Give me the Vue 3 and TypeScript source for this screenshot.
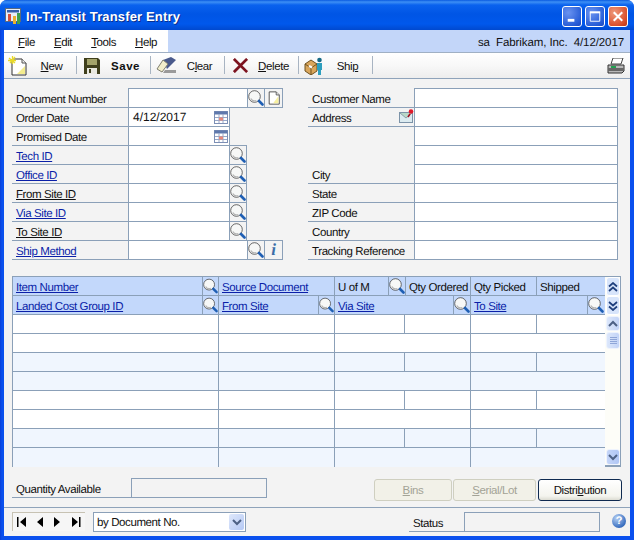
<script setup lang="ts">
import { computed } from 'vue'

type Box = { type: 'input' | 'short' | 'lens' | 'doc' | 'info'; text?: string; cal?: boolean }

const menus = [
  { u: 'F', rest: 'ile' },
  { u: 'E', rest: 'dit' },
  { u: 'T', rest: 'ools' },
  { u: 'H', rest: 'elp' }
]

const tools = [
  { icon: 'new', a: '', u: 'N', b: 'ew', bold: false },
  { icon: 'save', a: 'Save', u: '', b: '', bold: true },
  { icon: 'clear', a: 'C', u: 'l', b: 'ear', bold: false },
  { icon: 'delete', a: '', u: 'D', b: 'elete', bold: false },
  { icon: 'ship', a: 'Shi', u: 'p', b: '', bold: false }
]

const shortLens: Box[] = [{ type: 'short' }, { type: 'lens' }]

const leftRows: { label: string; kind: string; boxes: Box[] }[] = [
  { label: 'Document Number', kind: '', boxes: [{ type: 'input' }, { type: 'lens' }, { type: 'doc' }] },
  { label: 'Order Date', kind: '', boxes: [{ type: 'short', text: '4/12/2017', cal: true }] },
  { label: 'Promised Date', kind: '', boxes: [{ type: 'short', cal: true }] },
  { label: 'Tech ID', kind: 'link', boxes: shortLens },
  { label: 'Office ID', kind: 'link', boxes: shortLens },
  { label: 'From Site ID', kind: 'plain-link', boxes: shortLens },
  { label: 'Via Site ID', kind: 'link', boxes: shortLens },
  { label: 'To Site ID', kind: 'plain-link', boxes: shortLens },
  { label: 'Ship Method', kind: 'link', boxes: [{ type: 'input' }, { type: 'lens' }, { type: 'info' }] }
]

const rightRows = [
  { label: 'Customer Name', kind: '' },
  { label: 'Address', kind: 'note' },
  { label: '', kind: 'blank' },
  { label: '', kind: 'blank' },
  { label: 'City', kind: '' },
  { label: 'State', kind: '' },
  { label: 'ZIP Code', kind: '' },
  { label: 'Country', kind: '' },
  { label: 'Tracking Reference', kind: '' }
]

const headOne = [
  { w: 190, text: 'Item Number', link: true },
  { w: 16, lens: true },
  { w: 116, text: 'Source Document', link: true },
  { w: 54, text: 'U of M' },
  { w: 17, lens: true },
  { w: 65, text: 'Qty Ordered' },
  { w: 66, text: 'Qty Picked' },
  { w: 67, text: 'Shipped', last: true }
]

const headTwo = [
  { w: 190, text: 'Landed Cost Group ID', link: true },
  { w: 16, lens: true },
  { w: 100, text: 'From Site', link: true },
  { w: 16, lens: true },
  { w: 119, text: 'Via Site', link: true },
  { w: 17, lens: true },
  { w: 117, text: 'To Site', link: true },
  { w: 16, lens: true, last: true }
]

const splitCols = [206, 116, 70, 66, 66, 67]
const wideCols = [206, 116, 136, 133]

const bodyRows = computed(() =>
  Array.from({ length: 8 }, (_, i) => ({
    cols: i % 2 === 0 ? splitCols : wideCols,
    tinted: Math.floor(i / 2) % 2 === 1
  }))
)
</script>

<template>
  <div class="window">
    <svg class="sprites" width="0" height="0">
      <symbol id="lens" viewBox="0 0 16 16">
        <circle cx="6.500" cy="6.500" r="5.800" fill="#f7f8f7" stroke="#444" stroke-width="0.800" />
        <path d="M2.800 8.500a4.500 4.500 0 0 0 5.500 2" fill="none" stroke="#b4b4b4" stroke-width="1.300" />
        <path d="M11 11l3.500 3.500" stroke="#1f5fb4" stroke-width="2.600" stroke-linecap="round" />
      </symbol>
      <symbol id="doc" viewBox="0 0 16 16">
        <path d="M2.500 1h8l3.500 3.500V15h-11.500z" fill="#fff" stroke="#444" />
        <path d="M13 6v8H7z" fill="#f7f0a0" />
        <path d="M10.500 1v3.500H14" fill="#eee" stroke="#555" />
      </symbol>
      <symbol id="calendar" viewBox="0 0 14 13">
        <rect x="0.500" y="0.500" width="13" height="12" fill="#fff" stroke="#7c8fb5" />
        <rect x="0.500" y="0.500" width="13" height="3" fill="#5f79ad" />
        <path d="M5 3v9M9 3v9M1 6.500h12M1 9.500h12" stroke="#98a8c8" />
        <rect x="5" y="6.500" width="4" height="3" fill="#e8887a" />
      </symbol>
      <symbol id="new" viewBox="0 0 20 20">
        <path d="M4 3h10l4 4v12H4z" fill="#fff" stroke="#333" />
        <path d="M17 10v8h-8z" fill="#f3ec8e" />
        <path d="M14 3v4h4" fill="#eee" stroke="#555" />
        <path d="M1 2l6 5M7 1L2 7M0 4.500h8M4.500 0v8" stroke="#e8d92a" stroke-width="1.300" />
      </symbol>
      <symbol id="save" viewBox="0 0 16 16">
        <path d="M0 0h14l2 2v14H0z" fill="#3f3f1c" />
        <rect x="3" y="1" width="10" height="6" fill="#a3a36a" />
        <rect x="3" y="10" width="10" height="6" fill="#e8e8e0" />
        <rect x="5" y="11" width="2" height="4" fill="#3f3f1c" />
      </symbol>
      <symbol id="clear" viewBox="0 0 20 18">
        <path d="M7 3l8-3 5 3-9 9z" fill="#4a5a8c" />
        <path d="M1 12l6-9 5 4-6 8z" fill="#f2eecb" stroke="#7f7f70" />
        <path d="M9 13h11v3H7z" fill="#9a9a9a" />
      </symbol>
      <symbol id="delete" viewBox="0 0 16 16">
        <path d="M2 2l12 12M14 2L2 14" stroke="#7d1420" stroke-width="3" stroke-linecap="square" />
      </symbol>
      <symbol id="ship" viewBox="0 0 20 18">
        <path d="M1 7l6-4 6 4v7l-6 4-6-4z" fill="#d9a65c" stroke="#6f5220" />
        <path d="M1 7l6 4 6-4M7 11v7" fill="none" stroke="#6f5220" />
        <path d="M5 9l3 1.500" stroke="#fff" stroke-width="2" />
        <circle cx="15.500" cy="3" r="2.300" fill="#176a86" />
        <path d="M13 6h5v7h-1v5h-3v-5h-1z" fill="#2d9fbe" />
      </symbol>
      <symbol id="printer" viewBox="0 0 18 16">
        <path d="M6 0h10l-2 6H4z" fill="#fff" stroke="#444" />
        <path d="M1 7h16v6l-2 2H1z" fill="#b8b8b8" stroke="#333" />
        <path d="M1 10h16v3H1z" fill="#666" />
        <rect x="4" y="8" width="5" height="2" fill="#22a050" />
      </symbol>
      <symbol id="note" viewBox="0 0 15 15">
        <rect x="0.500" y="3.500" width="13" height="10" fill="#dcebf0" stroke="#7c93a8" />
        <path d="M1 4l6 5 6-5" fill="#b9d8c8" stroke="#8aa0aa" />
        <circle cx="12" cy="2.500" r="2.300" fill="#e01a2b" />
        <path d="M11 5l-2 3" stroke="#a01020" stroke-width="1.500" />
      </symbol>
      <symbol id="up2" viewBox="0 0 10 10">
        <path d="M1 4.500l4-3.500 4 3.500M1 9l4-3.500L9 9" fill="none" stroke="#1f3f7c" stroke-width="1.700" />
      </symbol>
      <symbol id="down2" viewBox="0 0 10 10">
        <path d="M1 1l4 3.500L9 1M1 5.500L5 9l4-3.500" fill="none" stroke="#1f3f7c" stroke-width="1.700" />
      </symbol>
      <symbol id="up1" viewBox="0 0 10 8">
        <path d="M1 6l4-4 4 4" fill="none" stroke="#4d6185" stroke-width="2" />
      </symbol>
      <symbol id="down1" viewBox="0 0 10 8">
        <path d="M1 2l4 4 4-4" fill="none" stroke="#4d6185" stroke-width="2" />
      </symbol>
    </svg>

    <header class="titlebar">
      <svg class="app-icon" width="18" height="18" viewBox="0 0 18 18">
        <rect x="0.500" y="1.500" width="15" height="13" fill="#e8eef8" stroke="#5a6a80" />
        <rect x="2" y="3" width="12" height="2.500" fill="#385fa8" />
        <rect x="3" y="7" width="3" height="7" fill="#d8503a" />
        <rect x="8" y="9" width="3" height="8" fill="#e8b030" />
        <rect x="12" y="6" width="3" height="11" fill="#3f9f4c" />
      </svg>
      <span class="title">In-Transit Transfer Entry</span>
      <div class="controls">
        <span class="ctl">
          <svg width="18" height="19" viewBox="0 0 19 19"><rect x="5" y="12" width="7" height="3" fill="#fff" /></svg>
        </span>
        <span class="ctl">
          <svg width="18" height="19" viewBox="0 0 19 19"><path d="M4.500 5.500h10v9h-10z" fill="none" stroke="#fff" /><rect x="4" y="4" width="11" height="2" fill="#fff" /></svg>
        </span>
        <span class="ctl close">
          <svg width="18" height="19" viewBox="0 0 19 19"><path d="M5 5l9 9M14 5l-9 9" stroke="#fff" stroke-width="2.200" /></svg>
        </span>
      </div>
    </header>

    <main class="client">
      <div class="menubar">
        <nav class="menus">
          <span v-for="m in menus" :key="m.u" class="menu"><u>{{ m.u }}</u>{{ m.rest }}</span>
        </nav>
        <span class="session">sa&nbsp; Fabrikam, Inc.&nbsp; 4/12/2017</span>
      </div>

      <div class="toolbar">
        <button v-for="t in tools" :key="t.icon" class="tool" type="button">
          <span class="tool-icon"><svg :class="'ico-' + t.icon"><use :href="'#' + t.icon" /></svg></span>
          <span class="tool-label" :class="{ bold: t.bold }">{{ t.a }}<u v-if="t.u">{{ t.u }}</u>{{ t.b }}</span>
        </button>
        <svg class="printer" width="18" height="16"><use href="#printer" /></svg>
      </div>

      <section class="form">
        <div class="col left">
          <div v-for="row in leftRows" :key="row.label" class="row">
            <label class="lbl" :class="row.kind"><span>{{ row.label }}</span></label>
            <template v-for="(b, i) in row.boxes" :key="i">
              <div v-if="b.type === 'input' || b.type === 'short'" class="field" :class="b.type">
                <span>{{ b.text }}</span>
                <svg v-if="b.cal" class="cal" width="14" height="13"><use href="#calendar" /></svg>
              </div>
              <div v-else class="ibtn" :class="b.type">
                <svg v-if="b.type === 'lens'" width="16" height="16"><use href="#lens" /></svg>
                <svg v-else-if="b.type === 'doc'" width="14" height="16"><use href="#doc" /></svg>
                <span v-else class="info">i</span>
              </div>
            </template>
          </div>
        </div>
        <div class="col right">
          <div v-for="(row, i) in rightRows" :key="i" class="row">
            <label class="lbl" :class="row.kind">
              <span>{{ row.label }}</span>
              <svg v-if="row.kind === 'note'" class="note-ico" width="15" height="15"><use href="#note" /></svg>
            </label>
            <div class="field wide"></div>
          </div>
        </div>
      </section>

      <section class="grid-wrap">
        <div class="grid">
          <div v-for="(head, h) in [headOne, headTwo]" :key="h" class="grid-row head">
            <div
              v-for="(c, i) in head"
              :key="i"
              class="cell"
              :class="{ last: c.last, icon: c.lens }"
              :style="{ width: c.w + 'px' }"
            >
              <svg v-if="c.lens" width="16" height="16"><use href="#lens" /></svg>
              <span v-else :class="{ link: c.link }">{{ c.text }}</span>
            </div>
          </div>
          <div v-for="(r, n) in bodyRows" :key="n" class="grid-row" :class="{ tinted: r.tinted }">
            <div
              v-for="(w, i) in r.cols"
              :key="i"
              class="cell"
              :class="{ last: i === r.cols.length - 1 }"
              :style="{ width: w + 'px' }"
            ></div>
          </div>
        </div>
        <aside class="scroller">
          <div class="jump"><svg width="10" height="10"><use href="#up2" /></svg></div>
          <div class="jump"><svg width="10" height="10"><use href="#down2" /></svg></div>
          <div class="track">
            <div class="sb"><svg width="10" height="8"><use href="#up1" /></svg></div>
            <div class="sb thumb"><i></i><i></i><i></i><i></i></div>
            <div class="sb end"><svg width="10" height="8"><use href="#down1" /></svg></div>
          </div>
        </aside>
      </section>

      <section class="footer">
        <div class="qty">
          <span class="lbl">Quantity Available</span>
          <div class="qty-box"></div>
        </div>
        <div class="actions">
          <button class="btn off" type="button" disabled><u>B</u>ins</button>
          <button class="btn off serial" type="button" disabled><u>S</u>erial/Lot</button>
          <button class="btn on" type="button">Distri<u>b</u>ution</button>
        </div>
      </section>

      <footer class="status">
        <div class="nav">
          <svg width="73" height="18" viewBox="0 0 73 18">
            <path d="M5 4h1.500v10H5zM14 4v10L8 9zM31 4v10l-6-5zM42 4v10l6-5zM60 4v10l6-5zM67 4h1.500v10H67z" fill="#000" />
          </svg>
        </div>
        <div class="select">
          <span>by Document No.</span>
          <span class="drop"><svg width="10" height="8"><use href="#down1" /></svg></span>
        </div>
        <span class="lbl status-lbl">Status</span>
        <div class="status-box"></div>
        <span class="help">?</span>
      </footer>
    </main>
  </div>
</template>

<style>
html,
body {
  margin: 0;
  background: #fff;
}
</style>

<style scoped>
.window {
  width: 634px;
  height: 540px;
  box-sizing: border-box;
  padding: 0 4px 4px;
  background: linear-gradient(90deg, #0a3fd8 0, #0a50ee 2px, #0a50ee 100%);
  border-radius: 7px 7px 0 0;
  font-family: "Liberation Sans", Arial, sans-serif;
  font-size: 11.5px;
  letter-spacing: -0.4px;
  text-rendering: geometricPrecision;
  color: #111;
  overflow: hidden;
  position: relative;
  white-space: nowrap;
}

.sprites {
  position: absolute;
}

.titlebar {
  height: 30px;
  box-sizing: border-box;
  margin: 0 -4px;
  padding: 2px 6px 0 5px;
  display: flex;
  align-items: center;
  background: linear-gradient(180deg, #0a5ae0 0, #3d8ff5 2px, #0a62ee 5px, #0055e5 14px, #0058ec 24px, #0049cf 30px);
}

.app-icon {
  margin-right: 3px;
}

.title {
  color: #fff;
  font-weight: bold;
  font-size: 13px;
  letter-spacing: 0.15px;
  text-shadow: 1px 1px 0 #0a2f8c;
}

.controls {
  margin-left: auto;
  display: flex;
  gap: 3px;
}

.ctl {
  width: 20px;
  height: 21px;
  box-sizing: border-box;
  border: 1px solid #fff;
  border-radius: 3px;
  background: radial-gradient(circle at 30% 30%, #6a93f0, #2a5fd8 70%, #1c48c0);
  display: flex;
}

.ctl.close {
  background: radial-gradient(circle at 30% 30%, #ef9a7c, #d9502c 70%, #b93414);
}

.client {
  height: 506px;
  background: #f3f3f3;
}

.menubar {
  height: 23px;
  box-sizing: border-box;
  display: flex;
  justify-content: space-between;
  align-items: center;
  background: #c3d6f9;
  border-bottom: 1px solid #a0b0c4;
}

.menus {
  width: 164px;
  height: 22px;
  background: #fff;
  display: flex;
  align-items: center;
  box-sizing: border-box;
  padding: 3px 0 0 14px;
}

.menu {
  margin-right: 19px;
}

.session {
  padding: 3px 6px 0 0;
  letter-spacing: -0.1px;
}

.toolbar {
  height: 26px;
  box-sizing: border-box;
  display: flex;
  align-items: center;
  background: linear-gradient(180deg, #fff, #f8f8f8 50%, #ededed);
  border-bottom: 1px solid #8fa3ba;
}

.tool {
  width: 74px;
  height: 25px;
  padding: 0 0 0 4px;
  border: 0;
  background: none;
  font: inherit;
  letter-spacing: inherit;
  color: inherit;
  display: flex;
  align-items: center;
  position: relative;
}

.tool::after {
  content: "";
  position: absolute;
  right: 1px;
  top: 3px;
  height: 18px;
  width: 1px;
  background: #a8b4c2;
}

.tool-icon {
  width: 20px;
  height: 20px;
  display: flex;
  align-items: center;
  justify-content: center;
}

.tool-label {
  flex: 1;
  text-align: center;
  padding-right: 3px;
}

.tool-label.bold {
  font-weight: bold;
  letter-spacing: 0.5px;
}

.ico-new {
  width: 20px;
  height: 20px;
}

.ico-save {
  width: 16px;
  height: 16px;
}

.ico-clear {
  width: 20px;
  height: 18px;
}

.ico-delete {
  width: 15px;
  height: 15px;
}

.ico-ship {
  width: 20px;
  height: 18px;
}

.printer {
  margin-left: auto;
  margin-right: 5px;
}

.form {
  padding: 9px 0 0 8px;
  display: flex;
  height: 172px;
}

.col.left {
  width: 296px;
}

.row {
  display: flex;
  height: 20px;
  margin-bottom: -1px;
}

.lbl {
  display: flex;
  align-items: center;
  box-sizing: border-box;
  padding: 4px 0 0 4px;
  border-bottom: 1px solid #8ba0b8;
}

.left .lbl {
  width: 116px;
}

.right .lbl {
  width: 106px;
  justify-content: space-between;
}

.lbl.blank {
  border-bottom: 0;
}

.lbl.link {
  color: #0a1fa8;
  text-decoration: underline;
}

.lbl.plain-link {
  text-decoration: underline;
}

.note-ico {
  margin-left: auto;
  margin-top: -4px;
}

.field,
.ibtn {
  box-sizing: border-box;
  border: 1px solid #8ba0b8;
  background: #fff;
  height: 20px;
}

.field {
  display: flex;
  align-items: center;
  padding-left: 4px;
  justify-content: space-between;
}

.field.input {
  width: 120px;
}

.field.short {
  width: 102px;
}

.field.short span {
  font-size: 12px;
  letter-spacing: 0;
}

.field.wide {
  width: 204px;
}

.cal {
  margin-right: 1px;
}

.ibtn {
  margin-left: -1px;
  background: #f3f3f3;
  display: flex;
  align-items: center;
  justify-content: center;
  width: 18px;
}

.ibtn.doc,
.ibtn.info {
  width: 19px;
}

.info {
  font-family: "Liberation Serif", serif;
  font-style: italic;
  font-weight: bold;
  font-size: 17px;
  color: #3a6ea8;
}

.grid-wrap {
  margin: 16px 0 0 8px;
  width: 609px;
  height: 191px;
  box-sizing: border-box;
  border: 1px solid #8ba0b8;
  border-bottom-width: 2px;
  display: flex;
}

.grid {
  width: 592px;
}

.grid-row {
  height: 19px;
  box-sizing: border-box;
  display: flex;
  background: #fff;
  border-bottom: 1px solid #8ba0b8;
}

.grid-row:last-child {
  border-bottom: 0;
}

.grid-row.tinted {
  background: #f0f6fe;
}

.grid-row.head {
  background: #c3d8fb;
}

.cell {
  box-sizing: border-box;
  border-right: 1px solid #8ba0b8;
  padding: 3px 0 0 3px;
  display: flex;
  align-items: center;
}

.cell.icon {
  padding: 0;
  justify-content: center;
}

.cell.last {
  border-right: 0;
}

.link {
  color: #0a1fa8;
  text-decoration: underline;
}

.scroller {
  flex: 1;
  background: #fdfdf8;
  display: flex;
  flex-direction: column;
  padding-left: 1px;
}

.jump {
  height: 19px;
  box-sizing: border-box;
  background: #d8e5fb;
  border: 1px solid #fff;
  border-radius: 3px;
  display: flex;
  align-items: center;
  justify-content: center;
}

.track {
  flex: 1;
  display: flex;
  flex-direction: column;
  padding-top: 1px;
}

.sb {
  height: 15px;
  box-sizing: border-box;
  background: linear-gradient(90deg, #dce7fb, #c3d4f7);
  border: 1px solid #eef3fd;
  border-radius: 3px;
  display: flex;
  align-items: center;
  justify-content: center;
}

.sb.thumb {
  height: 17px;
  margin-top: 1px;
  flex-direction: column;
  gap: 1px;
}

.sb.thumb i {
  display: block;
  width: 7px;
  height: 1px;
  background: #8fa6d8;
}

.sb.end {
  margin-top: auto;
  height: 16px;
  background: linear-gradient(90deg, #c4d5f8, #b0c6f4);
}

.footer {
  height: 41px;
  box-sizing: border-box;
  border-bottom: 1px solid #8fa3ba;
  display: flex;
  padding: 11px 0 0 8px;
}

.qty {
  display: flex;
  height: 20px;
}

.qty .lbl {
  width: 119px;
}

.qty-box {
  width: 136px;
  height: 20px;
  box-sizing: border-box;
  border: 1px solid #8ba0b8;
}

.actions {
  margin-left: 107px;
  margin-top: 1px;
  display: flex;
  gap: 1px;
}

.btn {
  width: 78px;
  height: 22px;
  padding: 0;
  box-sizing: border-box;
  border-radius: 3px;
  font: inherit;
  letter-spacing: inherit;
  color: #111;
}

.btn.off {
  color: #a3a396;
  background: #f2f1e8;
  border: 1px solid #cfcfc0;
}

.btn.serial {
  width: 83px;
}

.btn.on {
  width: 84px;
  margin-left: 1px;
  background: linear-gradient(180deg, #fff, #f4f4ee 80%, #dcdcd2);
  border: 1px solid #0f2a50;
}

.status {
  height: 27px;
  box-sizing: border-box;
  display: flex;
  align-items: flex-start;
  padding: 4px 0 0 8px;
}

.nav {
  width: 73px;
  height: 19px;
  box-sizing: border-box;
  border-top: 1px solid #c7c2b3;
  border-left: 1px solid #c7c2b3;
  background: #f6f6f6;
}

.nav svg {
  display: block;
  margin-left: -1px;
}

.select {
  width: 153px;
  height: 20px;
  margin-left: 8px;
  box-sizing: border-box;
  border: 1px solid #8ba0b8;
  background: #fff;
  display: flex;
  align-items: center;
  justify-content: space-between;
  padding: 2px 1px 0 3px;
}

.drop {
  width: 15px;
  height: 16px;
  margin-top: -2px;
  border-radius: 2px;
  background: linear-gradient(135deg, #dfe8fb, #b5c9f5);
  display: flex;
  align-items: center;
  justify-content: center;
}

.status-lbl {
  width: 55px;
  height: 20px;
  margin-left: 163px;
}

.status-box {
  width: 136px;
  height: 20px;
  box-sizing: border-box;
  border: 1px solid #8ba0b8;
}

.help {
  width: 14px;
  height: 14px;
  margin: 2px 0 0 12px;
  border-radius: 50%;
  background: radial-gradient(circle at 35% 30%, #b6d0f4, #3a6fc0 70%, #1f4a96);
  color: #fff;
  font-weight: bold;
  font-size: 11px;
  line-height: 14px;
  letter-spacing: 0;
  text-align: center;
}
</style>
